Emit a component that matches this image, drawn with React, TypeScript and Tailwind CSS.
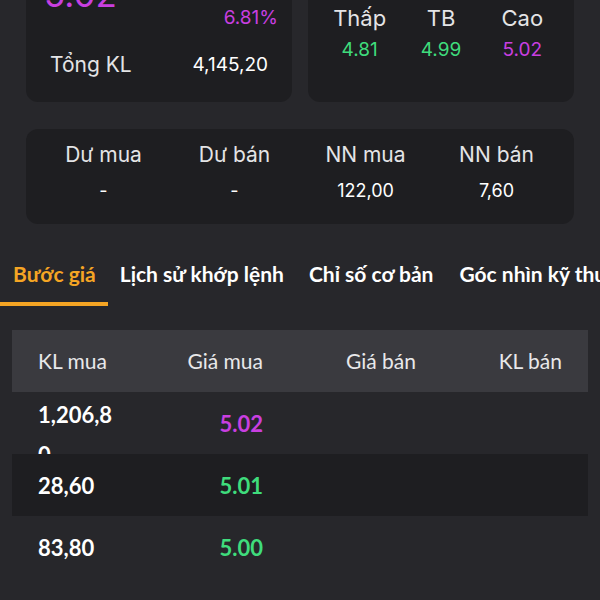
import React from 'react';

const PURPLE = 'text-[#c93fe0]';
const GREEN = 'text-[#3fdc7c]';

const rows = [
  { klMua: '1,206,80', giaMua: '5.02', up: true, dark: false },
  { klMua: '28,60', giaMua: '5.01', up: false, dark: true },
  { klMua: '83,80', giaMua: '5.00', up: false, dark: false },
];

const App = () => {
  return (
    <div className="w-[600px] h-[600px] overflow-hidden bg-[#27272b] text-white" style={{ fontFamily: 'Inter, "Noto Sans", sans-serif' }}>
      <div className="-mt-[70px] px-[26px]">
        <div className="grid grid-cols-2 gap-4">
          {/* price card */}
          <div className="bg-[#1e1e21] rounded-xl pt-[12px] pb-[22px]">
            <div className="flex justify-between items-start pl-[18px] pr-[14px]">
              <div className={`mt-[35px] text-[35px] leading-none ${PURPLE}`}>5.02</div>
              <div className={`mt-[34px] text-right text-[19px] leading-[28px] ${PURPLE}`}>
                <div>+0.32</div>
                <div>6.81%</div>
              </div>
            </div>
            <div className="mt-[19px] flex justify-between items-center pl-[24px] pr-[24px]">
              <span className="text-[21px] leading-[28px] text-[#e4e4e6]">Tổng KL</span>
              <span className="text-[19px] leading-[28px]">4,145,20</span>
            </div>
          </div>

          {/* range card */}
          <div className="bg-[#1e1e21] rounded-xl px-[11px] pb-[40px] flex flex-col justify-end">
            <div className="grid grid-cols-3 text-center">
              <div className="text-[22px] leading-[28px] text-[#e4e4e6]">Trần</div>
              <div className="text-[22px] leading-[28px] text-[#e4e4e6]">TC</div>
              <div className="text-[22px] leading-[28px] text-[#e4e4e6]">Sàn</div>
              <div className={`mt-[6px] text-[19px] leading-[24px] ${PURPLE}`}>5.02</div>
              <div className="mt-[6px] text-[19px] leading-[24px] text-[#f5c518]">4.70</div>
              <div className="mt-[6px] text-[19px] leading-[24px] text-[#3fc7e0]">4.38</div>
            </div>
            <div className="mt-[16px] grid grid-cols-3 text-center">
              <div className="text-[22px] leading-[28px] text-[#e4e4e6]">Thấp</div>
              <div className="text-[22px] leading-[28px] text-[#e4e4e6]">TB</div>
              <div className="text-[22px] leading-[28px] text-[#e4e4e6]">Cao</div>
              <div className={`mt-[6px] text-[19px] leading-[24px] ${GREEN}`}>4.81</div>
              <div className={`mt-[6px] text-[19px] leading-[24px] ${GREEN}`}>4.99</div>
              <div className={`mt-[6px] text-[19px] leading-[24px] ${PURPLE}`}>5.02</div>
            </div>
          </div>
        </div>

        {/* foreign / surplus card */}
        <div className="mt-[27px] bg-[#1e1e21] rounded-xl px-[12px] pt-[12px] pb-[21px] grid grid-cols-4 text-center">
          <div className="text-[21px] leading-[28px] text-[#e4e4e6]">Dư mua</div>
          <div className="text-[21px] leading-[28px] text-[#e4e4e6]">Dư bán</div>
          <div className="text-[21px] leading-[28px] text-[#e4e4e6]">NN mua</div>
          <div className="text-[21px] leading-[28px] text-[#e4e4e6]">NN bán</div>
          <div className="mt-[10px] text-[18px] leading-[24px]">-</div>
          <div className="mt-[10px] text-[18px] leading-[24px]">-</div>
          <div className="mt-[10px] text-[18px] leading-[24px]">122,00</div>
          <div className="mt-[10px] text-[18px] leading-[24px]">7,60</div>
        </div>
      </div>

      {/* tabs */}
      <div className="mt-[36px] flex whitespace-nowrap" style={{ fontFamily: 'Lato, "Noto Sans", sans-serif' }}>
        <div className="pl-[13px] pr-[12px] pb-[14px] border-b-4 border-[#f5a524] text-[#f5a524] text-[21px] leading-[28px] font-bold">Bước giá</div>
        <div className="px-[12px] pb-[14px] text-[21px] leading-[28px] font-bold">Lịch sử khớp lệnh</div>
        <div className="px-[13px] pb-[14px] text-[21px] leading-[28px] font-bold">Chỉ số cơ bản</div>
        <div className="px-[13px] pb-[14px] text-[21px] leading-[28px] font-bold">Góc nhìn kỹ thuật</div>
      </div>

      {/* order book */}
      <div className="mt-[24px] mx-[12px]" style={{ fontFamily: 'Lato, "Noto Sans", sans-serif' }}>
        <div className="h-[62px] bg-[#3a3a3f] flex items-center px-[26px] text-[21px] text-[#e8e8ea]">
          <div className="w-[80px]">KL mua</div>
          <div className="w-[145px] text-right">Giá mua</div>
          <div className="ml-[83px] w-[120px]">Giá bán</div>
          <div className="flex-1 text-right">KL bán</div>
        </div>
        {rows.map((r) => (
          <div
            key={r.giaMua}
            className={`h-[62px] overflow-hidden flex items-center px-[26px] text-[22px] font-bold ${r.dark ? 'bg-[#1e1e21]' : ''}`}
          >
            <div className={`w-[78px] break-all ${r.klMua.length > 6 ? 'self-start mt-[3px] leading-[40px]' : ''}`}>{r.klMua}</div>
            <div className={`w-[147px] text-right ${r.up ? PURPLE : GREEN}`}>{r.giaMua}</div>
            <div className="ml-[83px] w-[120px]"></div>
            <div className="flex-1 text-right"></div>
          </div>
        ))}
      </div>
    </div>
  );
};

export default App;
